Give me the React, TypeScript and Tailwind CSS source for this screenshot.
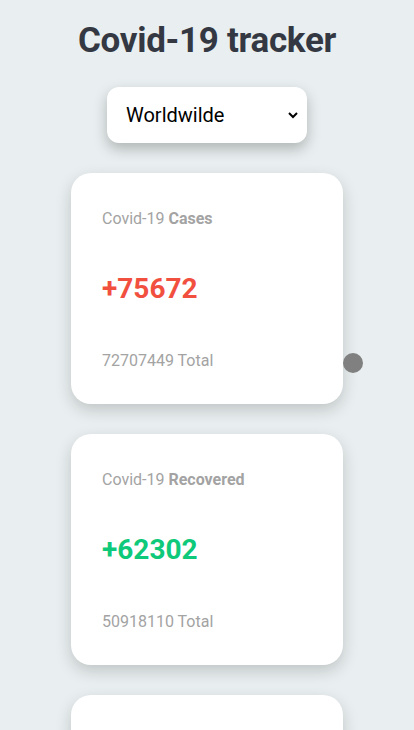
import React from 'react';

interface StatCardProps {
  label: string;
  today: number;
  total: number;
  color: string;
}

function StatCard({ label, today, total, color }: StatCardProps) {
  return (
    <div className="w-[272px] h-[231px] shrink-0 bg-white rounded-[20px] shadow-[0_6px_16px_rgba(0,0,0,0.18)] px-[31px] pt-[36px] flex flex-col">
      <p className="text-[16px] leading-[20px] text-[#a3a3a3]">
        Covid-19 <span className="font-bold">{label}</span>
      </p>
      <p className={`mt-[45px] text-[28px] leading-[30px] font-bold ${color}`}>+{today}</p>
      <p className="mt-[47px] text-[16px] leading-[20px] text-[#a3a3a3]">{total} Total</p>
    </div>
  );
}

export default function App() {
  return (
    <div className="h-[730px] overflow-hidden bg-[#e9eff0] flex flex-col items-center font-['Roboto',sans-serif]">
      <h1 className="mt-[20px] text-[35px] leading-[42px] font-bold text-[#343843] tracking-[-0.3px]">
        Covid-19 tracker
      </h1>

      {/* Country picker */}
      <div className="mt-[25px] w-[200px] h-[56px] shrink-0 bg-white rounded-xl shadow-[0_6px_14px_rgba(0,0,0,0.25)] flex items-center pl-[15px] pr-[6px]">
        <select
          defaultValue="world"
          className="w-full bg-transparent text-[20px] text-black outline-none"
        >
          <option value="world">Worldwilde</option>
        </select>
      </div>

      <div className="mt-[30px] flex flex-col gap-[30px]">
        <div className="relative">
          <StatCard label="Cases" today={75672} total={72707449} color="text-[#f2503f]" />
          <span className="absolute left-[272px] top-[180px] w-[20px] h-[20px] rounded-full bg-[#808080]" />
        </div>
        <StatCard label="Recovered" today={62302} total={50918110} color="text-[#0ec97a]" />
        <StatCard label="Deaths" today={1532} total={1612345} color="text-[#555555]" />
      </div>
    </div>
  );
}
